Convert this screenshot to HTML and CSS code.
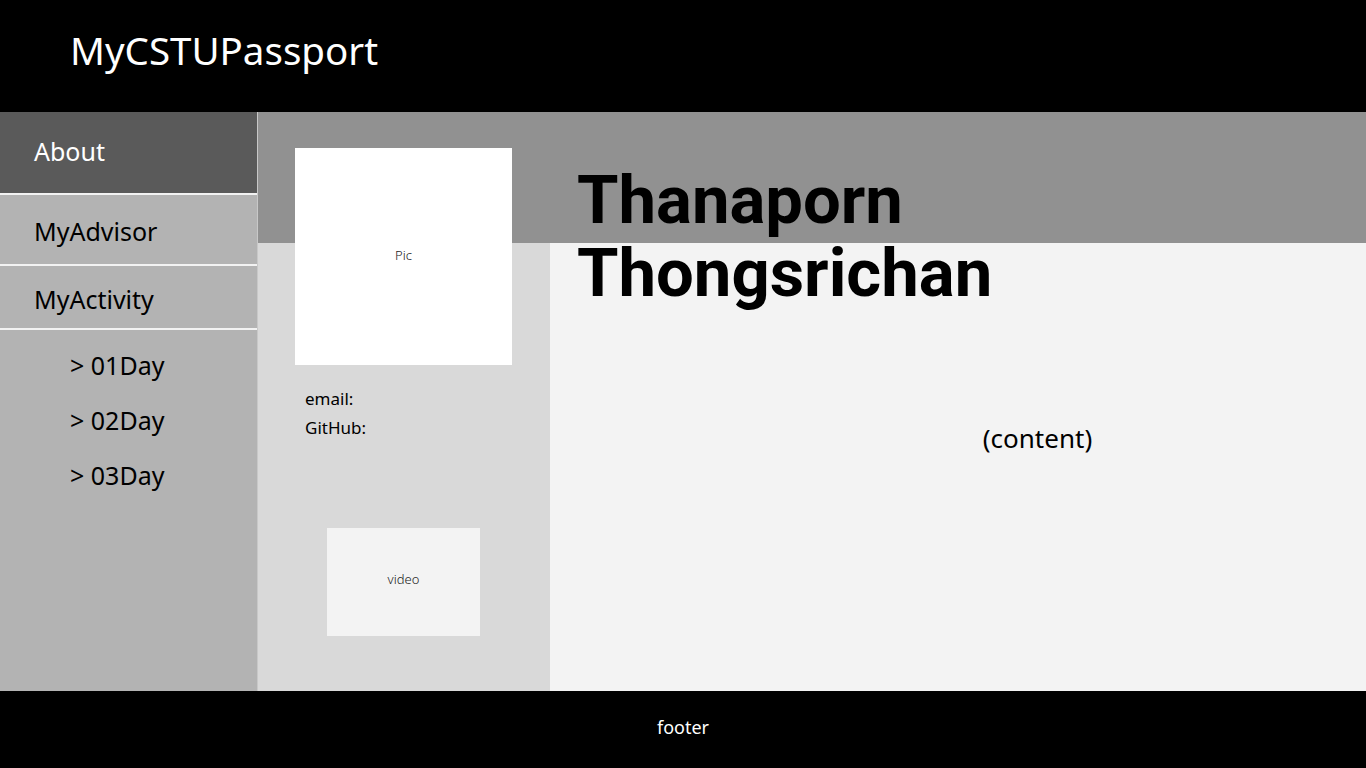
FILE: index.html
```html
<!DOCTYPE html>
<html lang="en">
<head>
<meta charset="utf-8">
<title>MyCSTUPassport</title>
<link rel="stylesheet" href="styles.css">
</head>
<body>
<div class="page">
  <header class="topbar">
    <h1 class="brand">MyCSTUPassport</h1>
  </header>
  <div class="middle">
    <nav class="sidebar">
      <a class="nav-item nav-about">About</a>
      <a class="nav-item nav-advisor">MyAdvisor</a>
      <a class="nav-item nav-activity">MyActivity</a>
      <ul class="sub-list">
        <li>&gt; 01Day</li>
        <li>&gt; 02Day</li>
        <li>&gt; 03Day</li>
      </ul>
    </nav>
    <main class="main">
      <section class="profile">
        <div class="pic">Pic</div>
        <div class="contact">
          <div>email:</div>
          <div>GitHub:</div>
        </div>
        <div class="video">video</div>
      </section>
      <section class="detail">
        <h2 class="name"><span class="name-line">Thanaporn</span><span class="name-line">Thongsrichan</span></h2>
        <div class="content">(content)</div>
      </section>
    </main>
  </div>
  <footer class="footer">footer</footer>
</div>
</body>
</html>
```

FILE: styles.css
```css
* { box-sizing: border-box; }
html, body { margin: 0; padding: 0; }
body {
  font-family: "Noto Sans", "DejaVu Sans", sans-serif;
  color: #000;
  background: #000;
}
.page {
  display: flex;
  flex-direction: column;
  height: 100vh;
}
.topbar {
  height: 112px;
  background: #000;
  display: flex;
  align-items: center;
  padding-left: 70px;
  flex: none;
}
.brand {
  margin: 0;
  font-size: 38.5px;
  font-weight: 400;
  color: #fff;
  line-height: 1;
  position: relative;
  top: -6px;
}
.middle {
  flex: 1;
  display: flex;
  min-height: 0;
}
.sidebar {
  width: 258px;
  flex: none;
  background: #b3b3b3;
  border-right: 1px solid #c8c8c8;
  display: flex;
  flex-direction: column;
}
.nav-item {
  display: flex;
  align-items: center;
  padding-left: 34px;
  font-size: 25px;
  color: #000;
  border-bottom: 2px solid #f2f2f2;
}
.nav-about {
  height: 83px;
  background: #5a5a5a;
  color: #fff;
  padding-bottom: 4px;
}
.nav-advisor { height: 71px; padding-top: 2px; }
.nav-activity { height: 64px; padding-top: 3px; }
.sub-list {
  list-style: none;
  margin: 0;
  padding: 8px 0 0 70px;
}
.sub-list li {
  font-size: 25px;
  line-height: 55px;
}
.main {
  flex: 1;
  display: grid;
  grid-template-columns: 292px 1fr;
}
.profile {
  background: linear-gradient(#919191 0 131px, #d9d9d9 131px);
  padding: 36px 0 0 37px;
}
.pic {
  width: 217px;
  height: 217px;
  background: #fff;
  display: flex;
  align-items: center;
  justify-content: center;
  font-size: 13px;
  font-weight: 300;
  color: #222;
  padding-bottom: 4px;
}
.contact {
  margin: 19px 0 0 10px;
  font-size: 17px;
  line-height: 29px;
}
.video {
  margin: 86px 0 0 32px;
  width: 153px;
  height: 108px;
  background: #f3f3f3;
  display: flex;
  align-items: center;
  justify-content: center;
  font-size: 13px;
  font-weight: 300;
  color: #222;
  padding-bottom: 6px;
}
.detail {
  background: linear-gradient(#919191 0 131px, #f3f3f3 131px);
  padding: 52px 0 0 27px;
}
.name {
  margin: 0;
  font-family: Roboto, "Liberation Sans", sans-serif;
  font-weight: 700;
  font-size: 67px;
  line-height: 73px;
}
.name-line {
  display: block;
  height: 73px;
}
.content {
  margin-top: 110px;
  padding-left: 132px;
  text-align: center;
  font-size: 26px;
}
.footer {
  height: 77px;
  flex: none;
  background: #000;
  color: #fff;
  display: flex;
  align-items: center;
  justify-content: center;
  font-size: 18px;
  padding-bottom: 6px;
}
```
